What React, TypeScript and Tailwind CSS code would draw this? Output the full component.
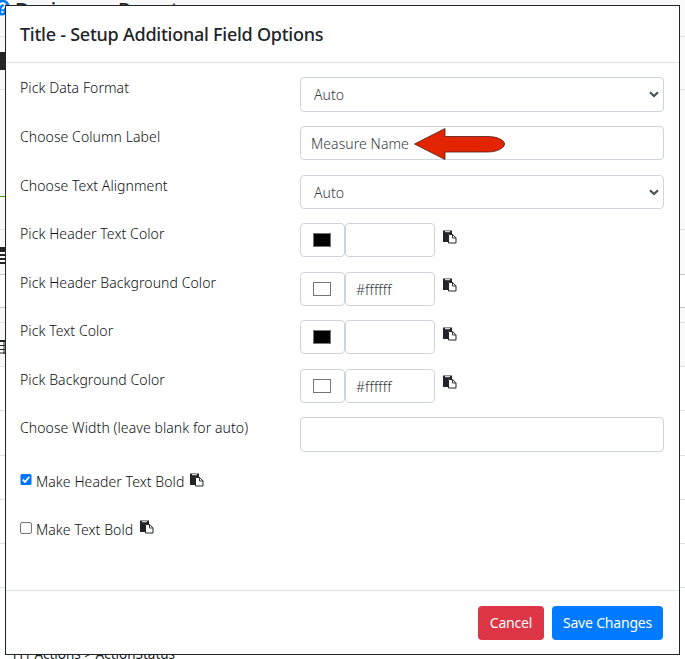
import { ReactNode } from "react";

type ColorField = { label: string; swatch: string; value: string; row: string; icon: string };

const colorFields: ColorField[] = [
  { label: "Pick Header Text Color", swatch: "bg-black", value: "", row: "h-[49px]", icon: "mt-[7px]" },
  { label: "Pick Header Background Color", swatch: "bg-white", value: "#ffffff", row: "h-12", icon: "mt-[6px]" },
  { label: "Pick Text Color", swatch: "bg-black", value: "", row: "h-[49px]", icon: "mt-[7px]" },
  { label: "Pick Background Color", swatch: "bg-white", value: "#ffffff", row: "h-12", icon: "mt-[6px]" },
];

// Rows of the table that sits behind the dialog
const pageRows = [
  "h-[37px] border-[#dee2e6] bg-[#f9f9f9]",
  "h-[53px] border-[#dee2e6] bg-[#f9f9f9]",
  "h-[140px] border-[#dee2e6] bg-[#f9f9f9]",
  "h-[45px] border-[#c3c7cb] bg-[#f9f9f9]",
  "h-[33px] border-[#c3c7cb] bg-white",
  "h-[15px] border-[#dee2e6] bg-[#f9f9f9]",
  "h-[44px] border-[#dee2e6] bg-[#f9f9f9]",
  "h-[44px] border-[#dee2e6] bg-white",
  "h-[45px] border-[#dee2e6] bg-white",
  "h-[44px] border-[#dee2e6] bg-white",
  "h-[44px] border-[#dee2e6] bg-white",
  "h-[44px] border-[#dee2e6] bg-white",
];

function PasteIcon({ className = "" }: { className?: string }) {
  return (
    <svg className={`shrink-0 ${className}`} width="14" height="14" viewBox="0 0 14 14">
      <path d="M0 0.5h9v3.5H5v8H0z" fill="#212529" />
      <path d="M2 1.7h5" stroke="#fff" strokeWidth="1" />
      <path d="M5.5 4.5h4.2l3.3 3.4v5.1H5.5z" fill="#fff" stroke="#212529" />
      <path d="M9.5 4.5v3.5h3.4" fill="none" stroke="#212529" strokeWidth="0.9" />
    </svg>
  );
}

function Chevron() {
  return (
    <svg width="10" height="7" viewBox="0 0 10 7" fill="none">
      <path d="M1 1.2l4 3.8 4-3.8" stroke="#495057" strokeWidth="2.1" />
    </svg>
  );
}

function Row({ label, height, children }: { label: string; height: string; children: ReactNode }) {
  return (
    <div className={`flex items-start ${height}`}>
      <label className="w-[280px] shrink-0 text-[14px] leading-[21px]">{label}</label>
      {children}
    </div>
  );
}

function Select({ height }: { height: string }) {
  return (
    <div className={`flex w-[364px] items-center justify-between rounded-[4px] border border-[#ced4da] pr-[4px] pl-[13px] text-[14px] leading-[20px] text-[#343a40] ${height}`}>
      <span className="pt-px">Auto</span>
      <Chevron />
    </div>
  );
}

function Backdrop() {
  return (
    <div className="h-[659px]">
      {pageRows.map((row, i) => (
        <div key={i} className={`border-b ${row}`} />
      ))}
      <svg className="absolute top-0 left-0" width="10" height="16" viewBox="0 0 10 16">
        <circle cx="2" cy="7.5" r="8" fill="#007bff" />
        <path d="M0 5.5c0-3 5-3 5 0 0 2-2.6 2-2.6 4M2.4 11v2" stroke="#fff" strokeWidth="2" fill="none" />
      </svg>
      <div className="absolute -top-[4px] left-[15px] flex text-[20px] leading-[28px] font-medium whitespace-nowrap">
        <span className="w-[103px]">Designer</span>
        <span className="tracking-[-0.9px]">Report</span>
      </div>
      <div className="absolute top-[52px] left-0 h-[18px] w-[5px] bg-[#212529]" />
      <div className="absolute top-[196px] left-0 h-px w-[5px] bg-[#3c9a00]" />
      <svg className="absolute top-[246px] left-0" width="5" height="19" viewBox="0 0 5 19">
        <path d="M0 1h5v5H0zM0 8h5v2H0zM0 12h5v2H0zM0 16h5v2H0z" fill="#212529" />
      </svg>
      <svg className="absolute top-[340px] left-0" width="5" height="14" viewBox="0 0 5 14">
        <path d="M0 0h5v2H0zM0 5h5v1H0zM0 9h5v1H0zM0 12.5h5v1H0zM3.5 0h1v14h-1z" fill="#212529" />
      </svg>
      <div className="absolute top-[645px] left-[13px] text-[13.5px] leading-[18px] whitespace-nowrap">
        <span className="mr-[5px]">[T]</span>Actions &gt; ActionStatus
      </div>
    </div>
  );
}

export default function App() {
  return (
    <div className="relative h-[659px] w-[685px] overflow-hidden bg-white font-['Noto_Sans',sans-serif] text-[#212529]">
      <Backdrop />

      <div className="absolute top-[5px] left-[5px] flex h-[650px] w-[675px] flex-col border border-[#212529] bg-white">
        <header className="h-[57px] border-b border-[#dee2e6] pt-[15px] pl-[14px]">
          <h5 className="text-[18px] leading-[27px] font-medium tracking-[-0.25px]">Title - Setup Additional Field Options</h5>
        </header>

        <main className="h-[527px] pt-[14px] pl-[14px] font-light tracking-[0.08px] text-[#0c0f12]">
          <Row label="Pick Data Format" height="h-[49px]">
            <Select height="h-[35px]" />
          </Row>
          <Row label="Choose Column Label" height="h-[49px]">
            <div className="relative flex h-[34px] w-[364px] items-center rounded-[4px] border border-[#ced4da] pl-[10px] text-[14px] text-[#343a40]">
              <span className="pt-px">Measure Name</span>
              {/* Callout arrow */}
              <svg className="absolute top-0 left-[112px]" width="93" height="34" viewBox="0 0 93 34">
                <path
                  d="M1.5 17L32 1.5V9.5H75C84 9.5 91.5 13 91.5 17S84 25 75 25H32V32.5Z"
                  fill="#e32400"
                  stroke="#4d2017"
                  strokeWidth="0.8"
                />
              </svg>
            </div>
          </Row>
          <Row label="Choose Text Alignment" height="h-12">
            <Select height="h-[34px]" />
          </Row>

          {colorFields.map((field) => (
            <Row key={field.label} label={field.label} height={field.row}>
              <div className="flex h-[34px] w-[45px] items-center rounded-[4px] border border-[#ced4da] pl-[12px]">
                <div className={`h-[14px] w-[18px] border border-[#767676] ${field.swatch}`} />
              </div>
              <div className="flex h-[34px] w-[90px] items-center rounded-[4px] border border-[#ced4da] pl-[10px] text-[14px] text-[#343a40]">
                {field.value}
              </div>
              <PasteIcon className={`ml-[8px] ${field.icon}`} />
            </Row>
          ))}

          <Row label="Choose Width (leave blank for auto)" height="h-[53px]">
            <div className="h-[35px] w-[364px] rounded-[4px] border border-[#ced4da]" />
          </Row>

          <div className="flex h-12 items-start text-[14px] leading-[21px]">
            <svg className="mt-[4px]" width="12" height="12" viewBox="0 0 12 12">
              <rect x="0.5" width="11" height="11" rx="1.5" fill="#0075ff" />
              <path d="M2.7 5.7l2.3 2.3 4.3-5.2" stroke="#fff" strokeWidth="1.8" fill="none" />
            </svg>
            <span className="ml-[4px] w-[146px] pt-px whitespace-nowrap">Make Header Text Bold</span>
            <PasteIcon className="mt-[3px] ml-[8px]" />
          </div>
          <div className="flex items-start text-[14px] leading-[21px]">
            <div className="mt-[4px] h-3 w-3 rounded-[2px] border border-[#767676]" />
            <span className="ml-[4px] w-[96px] pt-px whitespace-nowrap">Make Text Bold</span>
            <PasteIcon className="mt-[2px] ml-[8px]" />
          </div>
        </main>

        <footer className="flex flex-1 justify-end gap-2 border-t border-[#dee2e6] pt-[15px] pr-[16px] text-[14px] text-white">
          <button className="h-[34px] w-[66px] rounded-[4px] bg-[#dc3545] pb-px tracking-[-0.2px]">Cancel</button>
          <button className="h-[34px] w-[111px] rounded-[4px] bg-[#007bff] pb-px tracking-[-0.2px]">Save Changes</button>
        </footer>
      </div>
    </div>
  );
}
